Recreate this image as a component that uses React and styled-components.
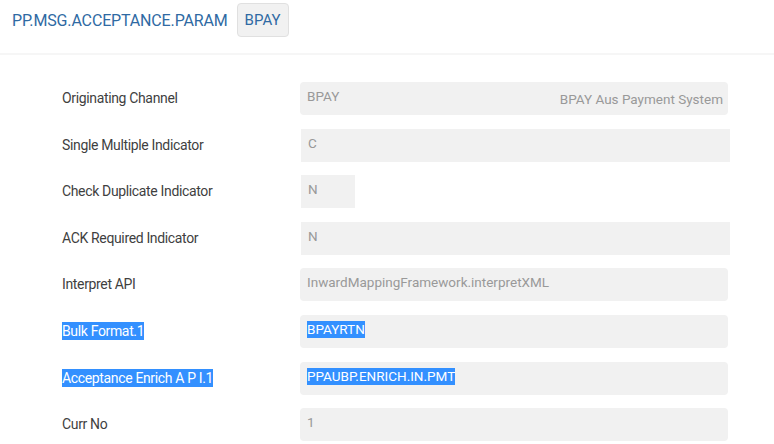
import styled, {createGlobalStyle} from "styled-components"

const GlobalStyle = createGlobalStyle`
	html, body {
		margin: 0;
		padding: 0;
		background: #fff;
		font-family: Roboto, "Liberation Sans", sans-serif;
	}
`

const rows = [
	{label: "Originating Channel", value: "BPAY", note: "BPAY Aus Payment System", rounded: true},
	{label: "Single Multiple Indicator", value: "C"},
	{label: "Check Duplicate Indicator", value: "N", narrow: true},
	{label: "ACK Required Indicator", value: "N"},
	{label: "Interpret API", value: "InwardMappingFramework.interpretXML", rounded: true},
	{label: "Bulk Format.1", value: "BPAYRTN", rounded: true, selected: true},
	{label: "Acceptance Enrich A P I.1", value: "PPAUBP.ENRICH.IN.PMT", rounded: true, selected: true},
	{label: "Curr No", value: "1", rounded: true},
]

const App = () => {
	return (
		<Page>
			<GlobalStyle />
			<Header>
				<Title>PP.MSG.ACCEPTANCE.PARAM</Title>
				<IdButton type="button">BPAY</IdButton>
			</Header>
			<Form>
				{rows.map((row) => (
					<Row key={row.label}>
						<Label>
							<Text $selected={row.selected}>{row.label}</Text>
						</Label>
						<Field $rounded={row.rounded} $narrow={row.narrow}>
							<Value $selected={row.selected}>{row.value}</Value>
							{row.note && <Note>{row.note}</Note>}
						</Field>
					</Row>
				))}
			</Form>
		</Page>
	)
}

export default App

const Page = styled.main`
	width: 774px;
	height: 444px;
	overflow: hidden;
`

const Header = styled.header`
	display: flex;
	align-items: center;
	gap: 9px;
	height: 40px;
	padding: 0 0 13px 12px;
	border-bottom: 2px solid #f6f6f6;
`

const Title = styled.h1`
	margin: 0;
	font-size: 16px;
	font-weight: 400;
	color: #2f6aa3;
	letter-spacing: -0.15px;
`

const IdButton = styled.button`
	height: 34px;
	padding: 0 7px;
	font-family: inherit;
	font-size: 15px;
	color: #2f6aa3;
	background: #f1f1f1;
	border: 1px solid #e0e0e0;
	border-radius: 4px;
`

const Form = styled.section`
	display: flex;
	flex-direction: column;
	gap: 13.6px;
	padding: 27px 0 0 62px;
`

const Row = styled.div`
	display: grid;
	grid-template-columns: 238px 430px;
	align-items: center;
	height: 33px;
`

const Label = styled.div`
	font-size: 14px;
	letter-spacing: -0.35px;
	color: #3f3f3f;
	margin-top: -1px;
`

const Text = styled.span`
	background: ${(p) => (p.$selected ? "#3390ff" : "transparent")};
	color: ${(p) => (p.$selected ? "#fff" : "inherit")};
	padding: 1px 0;
`

const Field = styled.div`
	display: flex;
	justify-content: space-between;
	align-items: flex-start;
	box-sizing: border-box;
	width: ${(p) => (p.$narrow ? "54px" : p.$rounded ? "428px" : "429px")};
	height: 33px;
	margin-left: ${(p) => (p.$rounded ? "0" : "1px")};
	padding: 6px 5px 0 7px;
	background: #f1f1f1;
	border-radius: ${(p) => (p.$rounded ? "4px" : "0")};
	font-size: 13.5px;
	color: #999;
`

const Value = styled.span`
	background: ${(p) => (p.$selected ? "#3390ff" : "transparent")};
	color: ${(p) => (p.$selected ? "#fff" : "inherit")};
	line-height: 17px;
`

const Note = styled.span`
	margin-top: 3px;
	line-height: 17px;
`
